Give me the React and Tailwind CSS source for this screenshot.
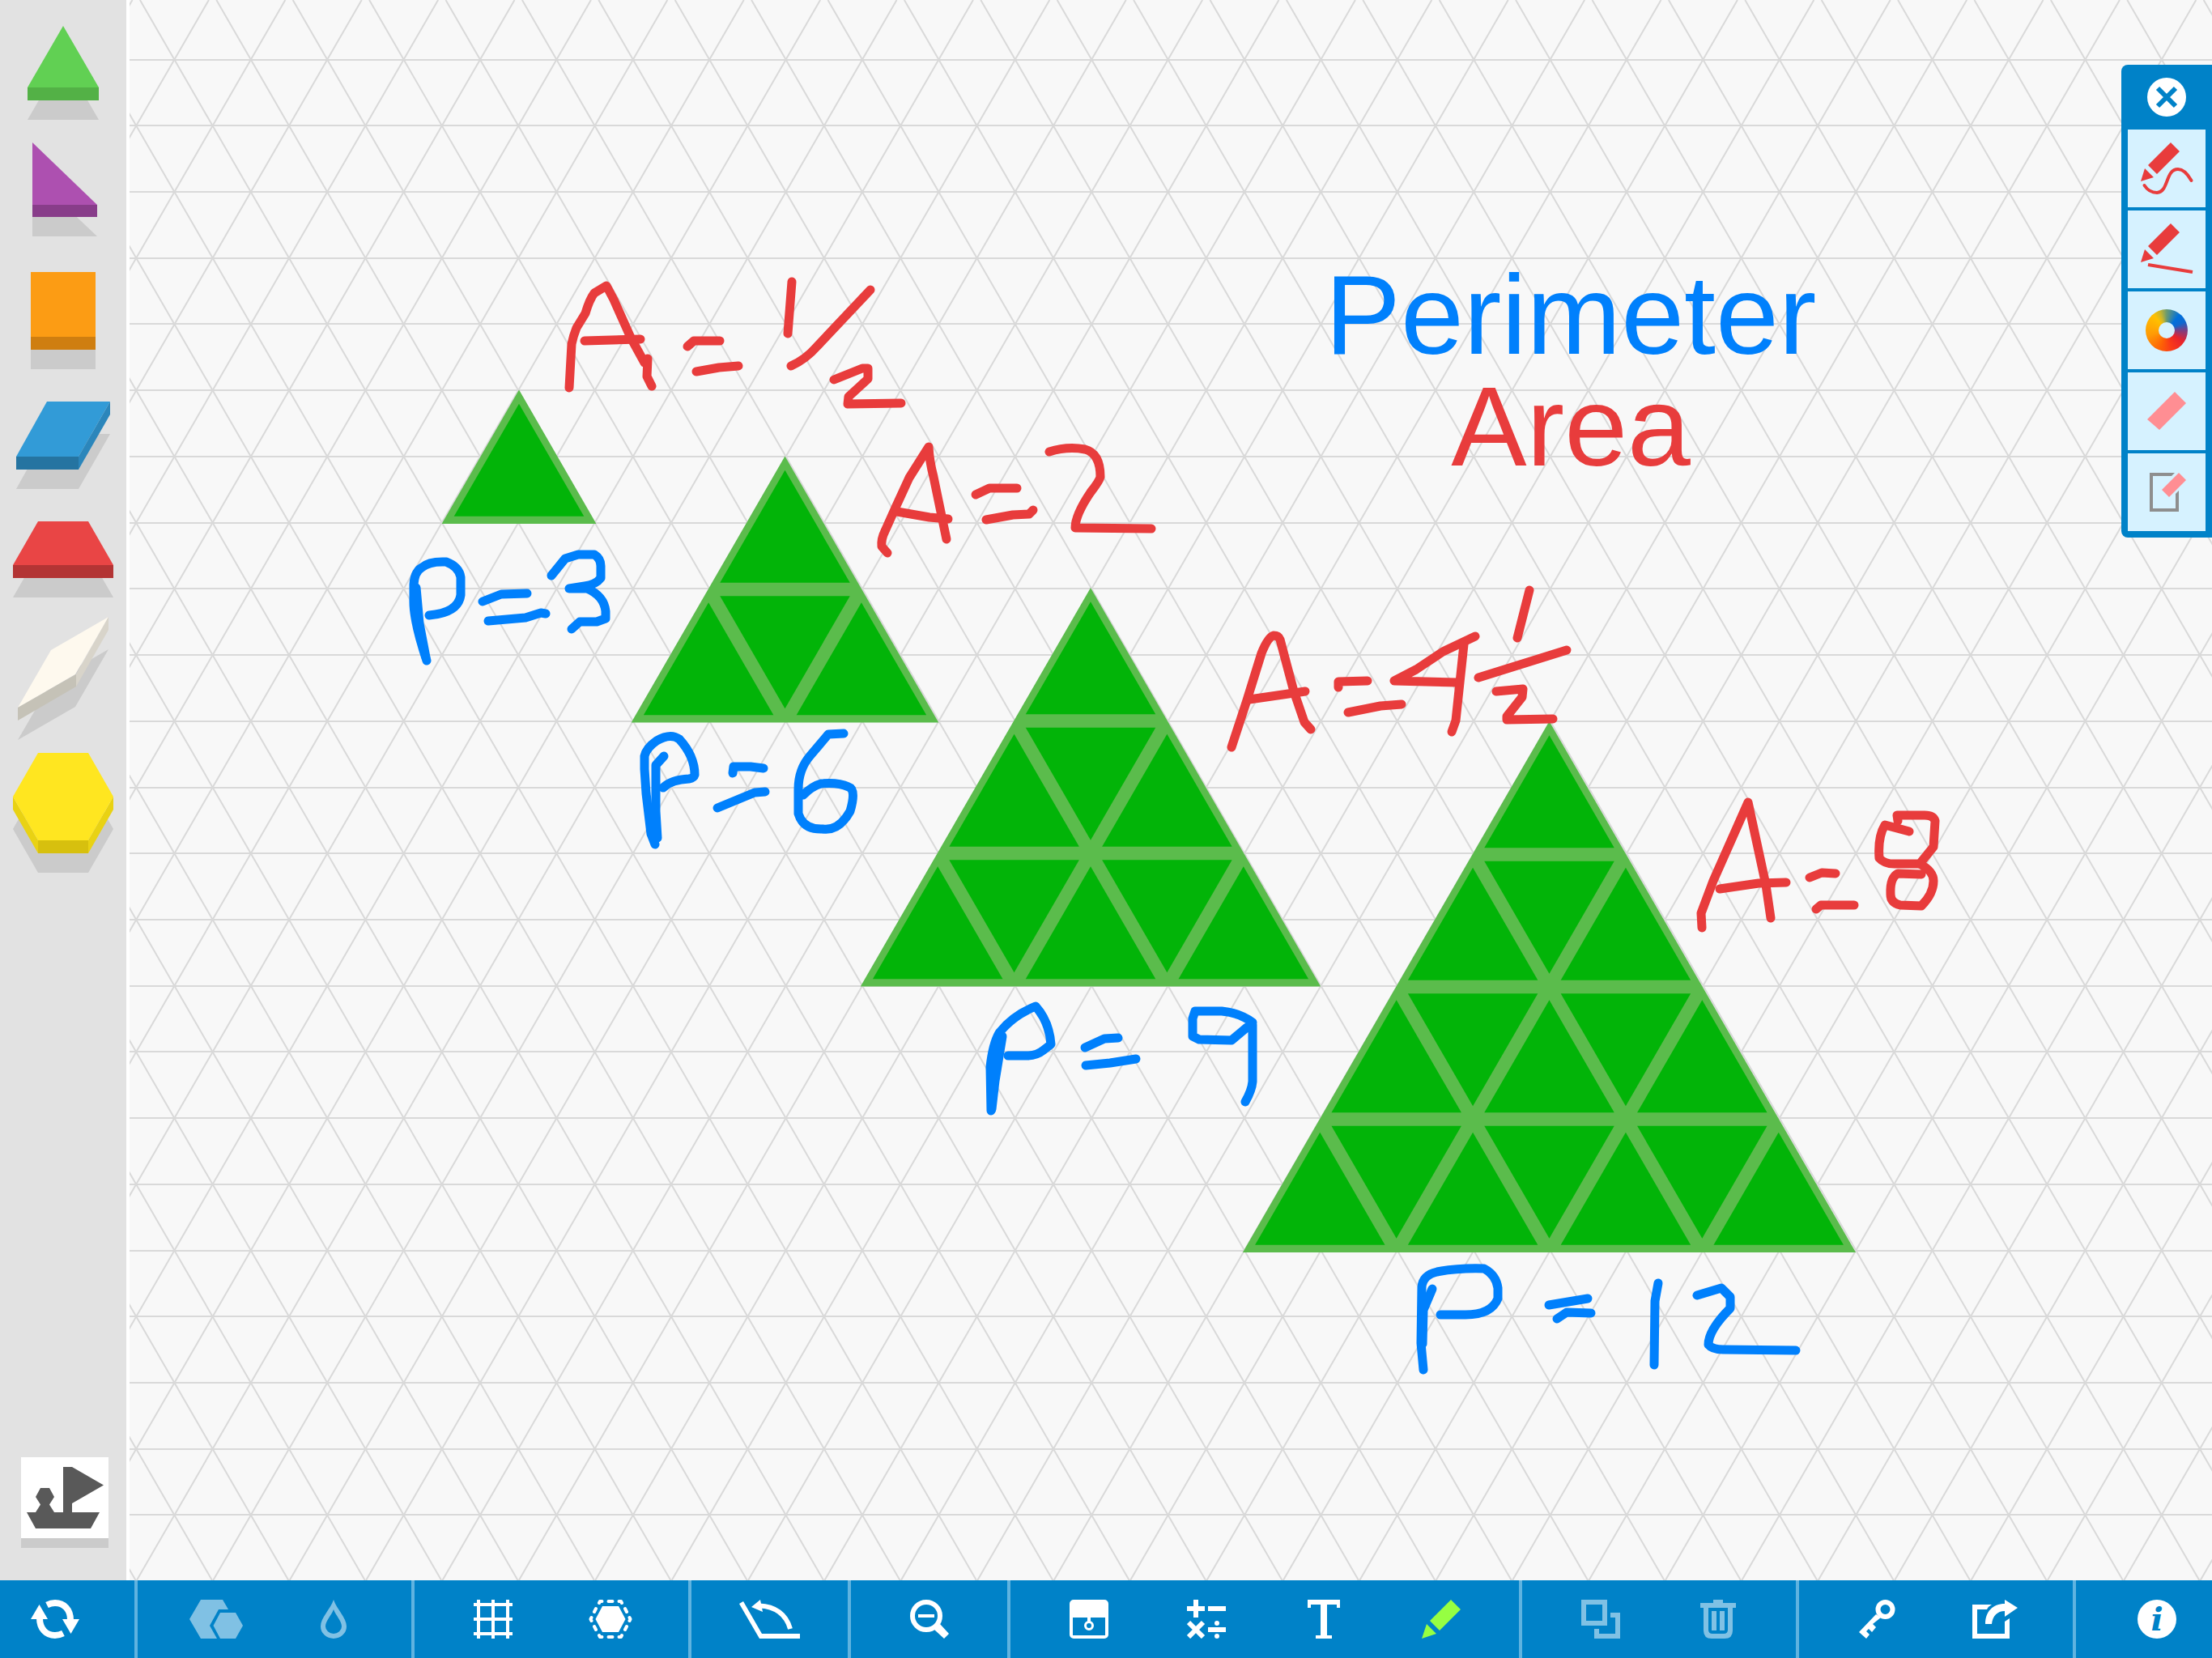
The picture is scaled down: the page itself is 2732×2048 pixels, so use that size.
import React from "react";
import clsx from "clsx";

const RED = "#e83c3c";
const BLUE = "#0080fc";
const PIECE = "#02b408";
const PIECE_EDGE = "#5bbc4c";

// triangular grid
const ROW = 81.72;
const SIDE = 94.4;
const GRID_X = 168.2;
const GRID_Y = 73.6;
const BOARD_LEFT = 160;
const BOARD_RIGHT = 2732;
const BOARD_BOTTOM = 1952;

const horizontals = Array.from({ length: 23 }, (_, i) => Math.round(GRID_Y + i * ROW));
const diagonals = Array.from({ length: 52 }, (_, i) => GRID_X + (i - 12) * SIDE);

const Grid = () => {
  // every diagonal is anchored on the second row
  const anchorY = GRID_Y + ROW;
  const slope = SIDE / 2 / ROW;
  return (
    <g stroke="#d9d9d9" strokeWidth="2" fill="none">
      {horizontals.map((y) => (
        <path key={y} d={`M${BOARD_LEFT} ${y}H${BOARD_RIGHT}`} />
      ))}
      {diagonals.map((x) => (
        <g key={x}>
          <path
            d={`M${x - anchorY * slope} 0L${x + (BOARD_BOTTOM - anchorY) * slope} ${BOARD_BOTTOM}`}
          />
          <path
            d={`M${x + anchorY * slope} 0L${x - (BOARD_BOTTOM - anchorY) * slope} ${BOARD_BOTTOM}`}
          />
        </g>
      ))}
    </g>
  );
};

const HALF = 94.4;
const HEIGHT = 163.5;
const INNER = 0.85;

const Pyramid = ({ x, y, rows }) => {
  const pieces = [];
  for (let row = 0; row < rows; row++) {
    const top = y + row * HEIGHT;
    for (let i = 0; i <= row; i++) {
      const cx = x + (2 * i - row) * HALF;
      const cy = top + (HEIGHT * 2) / 3;
      pieces.push([cx, cy, 1]);
      if (i < row) {
        pieces.push([cx + HALF, top + HEIGHT / 3, -1]);
      }
    }
  }
  const bottom = y + rows * HEIGHT + 1;
  return (
    <g>
      <polygon
        fill={PIECE_EDGE}
        points={`${x},${y - 1} ${x + rows * HALF + 1},${bottom} ${x - rows * HALF - 1},${bottom}`}
      />
      {pieces.map(([cx, cy, dir]) => {
        const tip = cy - dir * HEIGHT * (2 / 3) * INNER;
        const base = cy + dir * (HEIGHT / 3) * INNER;
        const w = HALF * INNER;
        return (
          <polygon
            key={`${cx}-${cy}`}
            fill={PIECE}
            points={`${cx},${tip} ${cx + w},${base} ${cx - w},${base}`}
          />
        );
      })}
    </g>
  );
};

const pyramids = [
  { x: 641, y: 482.5, rows: 1 },
  { x: 969.5, y: 564.5, rows: 2 },
  { x: 1347, y: 727, rows: 3 },
  { x: 1913.5, y: 892, rows: 4 },
];

const redInk = [
  // A = 1/2
  "M703 479L706 425Q708 415 712 405L723 387Q728 370 734 362L749 353L758 370L779 417L796 448",
  "M800 443L799 465L805 477",
  "M722 421L791 419",
  "M849 428L857 421L889 421",
  "M860 459L888 454L912 452",
  "M978 348L973 412",
  "M1075 358L1009 428Q995 444 977 452",
  "M1030 469L1065 455H1072V468L1048 490L1047 499L1113 498",
  // A = 2
  "M1096 683L1089 675Q1088 666 1093 656L1106 627L1123 590L1147 552Q1148 570 1153 589L1165 647L1169 666",
  "M1108 632L1148 639L1171 641",
  "M1205 611L1222 603H1256",
  "M1218 642L1251 636L1271 635L1276 630",
  "M1296 558Q1318 551 1340 555Q1359 560 1359 589Q1358 594 1347 608Q1328 636 1328 652L1422 653",
  // A = 4 1/2
  "M1521 923L1540 865L1558 807Q1566 787 1573 785Q1579 785 1581 790L1598 854L1611 892L1619 901",
  "M1543 864L1612 854",
  "M1653 849V842L1689 841",
  "M1665 880L1705 872L1731 870",
  "M1822 786L1782 805L1749 827L1722 841L1800 843",
  "M1808 796L1798 890L1793 904",
  "M1889 729L1874 788",
  "M1826 837L1935 803",
  "M1848 854L1881 851L1880 861L1861 885V889L1918 888",
  // A = 8
  "M2102 1146L2101 1128L2116 1088L2159 991L2181 1093L2187 1134",
  "M2124 1098L2172 1091L2206 1090",
  "M2235 1084L2250 1078L2267 1079",
  "M2243 1123L2249 1118H2290",
  "M2358 1027L2328 1019Q2319 1034 2321 1060Q2328 1068 2343 1067H2371L2388 1046L2390 1014Q2388 1007 2377 1007H2343L2344 1014",
  "M2371 1067Q2388 1076 2388 1088Q2388 1104 2373 1119L2347 1118Q2335 1115 2335 1105Q2334 1084 2344 1079L2373 1080",
];

const blueInk = [
  // P = 3
  "M527 816Q510 765 511 740V722Q512 706 521 701Q530 693 551 694Q567 700 569 713V735Q566 757 530 760",
  "M514 726L518 770L526 812",
  "M596 743L619 734L651 733",
  "M603 767L649 763L668 757L674 758",
  "M681 711L698 690L714 685H734Q742 690 742 699V714Q736 722 722 724L703 727H725Q746 736 748 755V764L737 768H716L706 777",
  // P = 6
  "M809 1043L804 1030L798 980L796 950V934Q798 924 811 915Q828 905 839 913Q858 934 858 957Q857 961 851 962Q829 963 819 973",
  "M820 934L810 945V1002L812 1035",
  "M905 955L906 947H927L943 949",
  "M886 998L932 979L945 978",
  "M1042 906L1023 907L1001 933Q986 950 986 975V1005Q992 1025 1016 1024Q1036 1027 1050 1002Q1058 975 1048 972Q1035 966 1014 968Q1003 971 992 982",
  // P = 9
  "M1224 1372L1223 1318Q1226 1290 1234 1276Q1250 1255 1279 1243Q1296 1262 1298 1290L1289 1297Q1279 1305 1265 1304H1245",
  "M1238 1280L1229 1335L1225 1370",
  "M1340 1294L1364 1283L1381 1282",
  "M1341 1316L1371 1313L1403 1308",
  "M1547 1263Q1531 1251 1509 1249H1476L1473 1258V1280L1481 1284L1521 1285L1540 1269L1547 1266V1336Q1546 1347 1538 1361",
  // P = 12
  "M1758 1692L1755 1659L1756 1590Q1757 1575 1775 1571Q1801 1566 1833 1567Q1848 1575 1850 1591V1604Q1842 1624 1810 1624H1779",
  "M1769 1592L1758 1618L1757 1660",
  "M1913 1612L1961 1604",
  "M1923 1629L1935 1621L1965 1622",
  "M2048 1585L2044 1607L2043 1686",
  "M2096 1600L2126 1591L2137 1602V1616Q2110 1643 2110 1661Q2115 1667 2128 1667L2218 1668",
];

const blocks = [
  {
    name: "Triangle", height: 116, gap: "mt-0", shadow: "78,40 122,116 34,116",
    faces: [["#61d053", "78,0 122,76 34,76"], ["#53b146", "34,76 122,76 122,92 34,92"]],
  },
  {
    name: "Right triangle", height: 116, gap: "mt-7", shadow: "40,40 120,116 40,116",
    faces: [["#ad50b0", "40,0 120,77 40,77"], ["#883d8a", "40,77 120,77 120,92 40,92"]],
  },
  {
    name: "Square", height: 120, gap: "mt-11", shadow: "38,40 118,40 118,120 38,120",
    faces: [["#fc9c14", "38,0 118,0 118,80 38,80"], ["#cf7e10", "38,80 118,80 118,96 38,96"]],
  },
  {
    name: "Rhombus", height: 108, gap: "mt-10", shadow: "58,40 136,40 97,108 20,108",
    faces: [
      ["#329bd7", "58,0 136,0 97,68 20,68"],
      ["#2b86bb", "136,0 136,16 97,84 97,68"],
      ["#2574a1", "20,68 97,68 97,84 20,84"],
    ],
  },
  {
    name: "Trapezoid", height: 94, gap: "mt-10", shadow: "47,40 109,40 140,94 16,94",
    faces: [["#e94545", "47,0 109,0 140,54 16,54"], ["#b33434", "16,54 140,54 140,70 16,70"]],
  },
  {
    name: "Thin rhombus", height: 152, gap: "mt-6", shadow: "134,40 63,81 22,152 93,111",
    faces: [
      ["#fef9ee", "134,0 63,41 22,112 93,71"],
      ["#d8d4ca", "134,0 134,16 94,86 94,71"],
      ["#c5c2b7", "22,112 94,71 94,86 22,128"],
    ],
  },
  {
    name: "Hexagon", height: 148, gap: "mt-4", shadow: "47,40 109,40 140,94 109,148 47,148 16,94",
    faces: [
      ["#e9d213", "16,54 47,108 109,108 140,54 140,70 109,124 47,124 16,70"],
      ["#d7c00e", "47,108 109,108 109,124 47,124"],
      ["#ffe620", "47,0 109,0 140,54 109,108 47,108 16,54"],
    ],
  },
];

const Sidebar = () => (
  <aside className="flex w-40 shrink-0 flex-col border-r-4 border-white bg-[#e2e2e2] pt-8 pb-10">
    {blocks.map((block) => (
      <button key={block.name} type="button" aria-label={block.name} className={clsx("block w-full", block.gap)}>
        <svg width="156" height={block.height} className="block">
          <polygon points={block.shadow} fill="#cbcbcb" />
          {block.faces.map(([fill, points]) => (
            <polygon key={points} points={points} fill={fill} />
          ))}
        </svg>
      </button>
    ))}
    <button
      type="button"
      aria-label="Shape outlines"
      className="mt-auto ml-[26px] w-[108px] border-b-12 border-[#cbcbcb] bg-white"
    >
      <svg width="108" height="100" className="block" fill="#595959">
        <path d="M52 12H63L102 34.500L63 57V68H97L86 88H18L7 68H18L24 58.500L18 49L24 38H35L41 49L35 58.500L41 68H52Z" />
      </svg>
    </button>
  </aside>
);

const Icon = ({ w = 48, children }) => (
  <svg width={w} height="48" viewBox={`0 0 ${w} 48`} fill="currentColor" stroke="none" className="block">
    {children}
  </svg>
);

const RefreshIcon = () => (
  <Icon w={60}>
    <path d="M10.500 6L0 24H21Z M49.500 42L60 24H39Z" />
    <path
      d="M11 23C11 36 19 44 30 44Q35 44 40 41.500 M49 25C49 12 41 4 30 4Q25 4 20 6.500"
      fill="none" stroke="currentColor" strokeWidth="8"
    />
  </Icon>
);

const HexagonsIcon = () => (
  <Icon w={66}>
    <path d="M14 0H41L48 12H36L25 32L34 48H14L0 24Z M38 16H57L66 32L57 48H38L29.500 32Z" />
  </Icon>
);

const DropIcon = () => (
  <Icon w={32}>
    <path
      fillRule="evenodd"
      d="M16 0C20 12 32 22 32 33A16 15 0 0 1 0 33C0 22 12 12 16 0Z M16 12C13 20 6 26 6 33A10 9 0 0 0 26 33C26 26 19 20 16 12Z"
    />
  </Icon>
);

const GridIcon = () => (
  <Icon>
    <path d="M6 0V48M24 0V48M42 0V48M0 6H48M0 24H48M0 42H48" stroke="currentColor" strokeWidth="4" />
  </Icon>
);

const SelectionIcon = () => (
  <Icon w={54}>
    <path d="M17 8H37L45.500 24L37 40H17L8.500 24Z" />
    <g fill="none" stroke="currentColor" strokeWidth="4" strokeLinecap="round" strokeLinejoin="round">
      <path d="M13 4L14 2H16.500M24.500 2H29.500M37.500 2H40L41 4" />
      <path d="M13 44L14 46H16.500M24.500 46H29.500M37.500 46H40L41 44" />
      <path d="M9 11L7 15M45 11L47 15M9 37L7 33M45 37L47 33" />
      <path d="M3.500 22L2.500 24L3.500 26M50.500 22L51.500 24L50.500 26" />
    </g>
  </Icon>
);

const RotateIcon = () => (
  <Icon w={75}>
    <path d="M0 5L5 2L28 42H75V48H25Z M15 9L26 0L29 15Z" />
    <path d="M25 7.500C44 8 58 18 63 36" fill="none" stroke="currentColor" strokeWidth="6" />
  </Icon>
);

const ZoomOutIcon = () => (
  <Icon>
    <circle cx="20" cy="20" r="17" fill="none" stroke="currentColor" strokeWidth="6" />
    <path d="M10 18H30V22H10Z M30 37L37 30L48 42L42 48Z" />
  </Icon>
);

const DrawerIcon = () => (
  <Icon>
    <path
      fillRule="evenodd"
      d="M5 0H43A5 5 0 0 1 48 5V43A5 5 0 0 1 43 48H5A5 5 0 0 1 0 43V5A5 5 0 0 1 5 0Z M4 22V44H44V22Z"
    />
    <path d="M22 21H26V27H22Z" />
    <circle cx="24" cy="32" r="4.500" fill="none" stroke="currentColor" strokeWidth="3" />
  </Icon>
);

const MathIcon = () => (
  <Icon>
    <path d="M0 11H22M11 0V22M26 11H48M26 37H48M2 28L20 46M20 28L2 46" stroke="currentColor" strokeWidth="6" />
    <circle cx="37" cy="29" r="3" />
    <circle cx="37" cy="45" r="3" />
  </Icon>
);

const TypeIcon = () => (
  <Icon w={40}>
    <g stroke="currentColor" fill="none">
      <line x1="0" y1="3" x2="40" y2="3" strokeWidth="6" />
      <line x1="20" y1="3" x2="20" y2="46" strokeWidth="8" />
      <line x1="10" y1="46" x2="30" y2="46" strokeWidth="4" />
      <line x1="2" y1="0" x2="2" y2="10" strokeWidth="4" />
      <line x1="38" y1="0" x2="38" y2="10" strokeWidth="4" />
    </g>
  </Icon>
);

const PencilIcon = () => (
  <Icon>
    <path d="M36 0L48 12L22 38L10 26Z M6 30L18 42L0 48Z" />
  </Icon>
);

const CopyIcon = () => (
  <Icon>
    <path fillRule="evenodd" d="M0 0H32V32H0Z M6 6V26H26V6Z" />
    <path d="M36 16H48V48H16V36H22V42H42V22H36Z" />
  </Icon>
);

const TrashIcon = () => (
  <Icon w={44}>
    <path
      fillRule="evenodd"
      d="M16 0H28V4H44V10H40V38Q40 48 30 48H14Q4 48 4 38V10H0V4H16Z M10 10V37Q10 42 15 42H29Q34 42 34 37V10Z"
    />
    <path d="M14 14H20V38H14Z M24 14H30V38H24Z" />
  </Icon>
);

const KeyIcon = () => (
  <Icon w={45}>
    <circle cx="32.500" cy="12" r="9" fill="none" stroke="currentColor" strokeWidth="6" />
    <path d="M21 18L0 40L9 48L13 43L9 39L12 36L16 40L21 34L17 30L27 22Z" />
  </Icon>
);

const ShareIcon = () => (
  <Icon w={56}>
    <path d="M0 6H24Q20 8 18 12H6V42H40V27L46 23V48H0Z" />
    <path d="M40 0L56 10L40 21V14C31 14 25 20 24 30H16C16 15 25 5 40 5Z" />
  </Icon>
);

const InfoIcon = () => (
  <span className="flex size-12 items-center justify-center rounded-full bg-white font-['DejaVu_Serif'] text-[40px] leading-12 font-bold text-[#0082c8] italic">
    i
  </span>
);

const sections = [
  [["Reset", RefreshIcon]],
  [["Group shapes", HexagonsIcon, "text-white/50"], ["Fill", DropIcon, "text-white/50"]],
  [["Grid", GridIcon], ["Outline", SelectionIcon]],
  [["Rotate", RotateIcon]],
  [["Zoom out", ZoomOutIcon]],
  [["Cover", DrawerIcon], ["Equation", MathIcon], ["Text", TypeIcon], ["Draw", PencilIcon, "text-[#96ff42]"]],
  [["Duplicate", CopyIcon, "text-white/50"], ["Delete", TrashIcon, "text-white/50"]],
  [["Solve", KeyIcon], ["Share", ShareIcon]],
  [["Info", InfoIcon]],
];

const Toolbar = () => (
  <nav className="flex h-24 shrink-0 overflow-hidden bg-[#0082c8] text-white">
    {sections.map((items, index) => {
      const first = index === 0;
      const last = index === sections.length - 1;
      return (
        <div
          key={items[0][0]}
          className={clsx(
            "flex",
            !first && "border-l-4 border-[#5fb3e0]",
            first && "w-[166px] shrink-0",
            last && "flex-1 justify-end",
            !first && !last && "shrink-0 px-6"
          )}
        >
          {items.map(([label, Glyph, tone]) => (
            <button
              key={label}
              type="button"
              aria-label={label}
              className={clsx(
                "flex items-center justify-center",
                first || last ? "w-[136px]" : "w-[145px]",
                tone
              )}
            >
              <Glyph />
            </button>
          ))}
        </div>
      );
    })}
  </nav>
);

const cell = "flex size-24 items-center justify-center bg-[#d6f2ff]";

const DrawPanel = () => (
  <div className="absolute top-20 right-0 flex w-28 flex-col items-center gap-1 rounded-l-lg bg-[#0082c8] px-2 pb-2">
    <button type="button" aria-label="Close" className="mt-4 mb-3 size-12 rounded-full bg-white">
      <svg width="48" height="48" className="block">
        <path d="M13 13L35 35M35 13L13 35" stroke="#0082c8" strokeWidth="6" />
      </svg>
    </button>
    <button type="button" aria-label="Freehand" className={cell}>
      <svg width="96" height="96" fill={RED}>
        <path d="M53 16L64 27L36 55L25 44Z M21 48L32 59L16 64Z" />
        <path
          d="M20.500 69C25 76 31 78 36 78C51 77 46 49 62 49C68 49 74 55 78.500 63"
          fill="none" stroke={RED} strokeWidth="4" strokeLinecap="round"
        />
      </svg>
    </button>
    <button type="button" aria-label="Line" className={cell}>
      <svg width="96" height="96" fill={RED}>
        <path d="M53 16L64 27L36 55L25 44Z M21 48L32 59L16 64Z" />
        <path d="M25 67L80 76" stroke={RED} strokeWidth="4" />
      </svg>
    </button>
    <button type="button" aria-label="Color" className={cell}>
      <span className="flex size-13 items-center justify-center rounded-full bg-[conic-gradient(#6b9a70,#0070dc_40deg,#0f68cf_65deg,#7a3f84_90deg,#e8232c_125deg,#fa3a18_165deg,#fd6205_200deg,#ff9b06_255deg,#ffc000_320deg,#c9b62c_340deg,#6b9a70)]">
        <span className="size-5 rounded-full bg-[#d6f2ff]" />
      </span>
    </button>
    <button type="button" aria-label="Eraser" className={cell}>
      <svg width="96" height="96">
        <path d="M58 24L72 38L39 71L24 58Z" fill="#ff8e93" />
      </svg>
    </button>
    <button type="button" aria-label="Erase all" className={cell}>
      <svg width="96" height="96">
        <path d="M27 24H58L54 28H31V68H59V50L63 46V72H27Z" fill="#8e8e8e" />
        <path d="M63 24L72 33L51 54L42 45Z" fill="#ff8e93" />
      </svg>
    </button>
  </div>
);

const Board = () => (
  <main className="relative min-w-0 flex-1 overflow-hidden bg-[#f8f8f8]">
    <svg
      viewBox="160 0 2572 1952"
      preserveAspectRatio="xMinYMin slice"
      className="absolute inset-0 size-full"
    >
      <Grid />
      {pyramids.map((p) => (
        <Pyramid key={p.rows} {...p} />
      ))}
      <g fill="none" strokeWidth="11" strokeLinecap="round" strokeLinejoin="round">
        {redInk.map((d) => (
          <path key={d} d={d} stroke={RED} />
        ))}
        {blueInk.map((d) => (
          <path key={d} d={d} stroke={BLUE} />
        ))}
      </g>
    </svg>
    <div className="absolute top-[320px] left-[1460px] w-[640px] text-center font-['Liberation_Sans',sans-serif] text-[140px] leading-[138px] whitespace-nowrap">
      <p className="text-[#0080fc]">Perimeter</p>
      <p className="text-[#e83c3c]">Area</p>
    </div>
    <DrawPanel />
  </main>
);

const App = () => (
  <div className="flex min-h-screen flex-col">
    <div className="flex flex-1">
      <Sidebar />
      <Board />
    </div>
    <Toolbar />
  </div>
);

export default App;
